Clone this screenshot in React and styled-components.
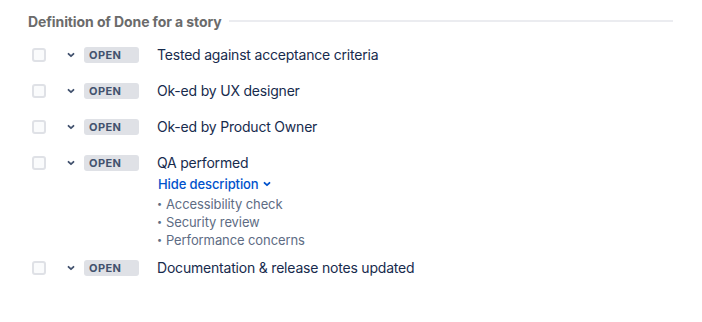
import React from "react";
import styled, { createGlobalStyle } from "styled-components";

const GlobalStyle = createGlobalStyle`
  body {
    margin: 0;
    background: #ffffff;
    font-family: Inter, "Noto Sans", sans-serif;
  }
`;

const items = [
  { title: "Tested against acceptance criteria" },
  { title: "Ok-ed by UX designer" },
  { title: "Ok-ed by Product Owner" },
  {
    title: "QA performed",
    description: ["Accessibility check", "Security review", "Performance concerns"],
  },
  { title: "Documentation & release notes updated" },
];

function Chevron({ color = "#42526e", size = 10 }) {
  return (
    <svg width={size} height={size} viewBox="0 0 10 10" fill="none">
      <path d="M2.5 3.8 L5 6.2 L7.5 3.8" stroke={color} strokeWidth="1.8" strokeLinecap="round" strokeLinejoin="round" />
    </svg>
  );
}

function ChecklistItem({ item }) {
  return (
    <Row>
      <Checkbox />
      <Toggle>
        <Chevron />
      </Toggle>
      <Lozenge>OPEN</Lozenge>
      <Body>
        <Title>{item.title}</Title>
        {item.description && (
          <>
            <HideLink>
              Hide description <Chevron color="#0052cc" size={10} />
            </HideLink>
            <Bullets>
              {item.description.map((d) => (
                <li key={d}>{d}</li>
              ))}
            </Bullets>
          </>
        )}
      </Body>
    </Row>
  );
}

export default function App() {
  return (
    <>
      <GlobalStyle />
      <Container>
        <Header>
          <Heading>Definition of Done for a story</Heading>
          <Rule />
        </Header>
        <List>
          {items.map((item) => (
            <ChecklistItem key={item.title} item={item} />
          ))}
        </List>
      </Container>
    </>
  );
}

const Container = styled.div`
  width: 645px;
  padding: 12px 0 0 28px;
`;

const Header = styled.div`
  display: flex;
  align-items: center;
  gap: 7px;
  height: 18px;
`;

const Heading = styled.h3`
  margin: 0;
  font-size: 14px;
  font-weight: 700;
  letter-spacing: -0.1px;
  color: #6b6b6b;
  white-space: nowrap;
`;

const Rule = styled.div`
  flex: 1;
  height: 2px;
  background: #ebecf0;
`;

const List = styled.div`
  display: flex;
  flex-direction: column;
  gap: 18px;
  margin-top: 16px;
`;

const Row = styled.div`
  display: flex;
  align-items: flex-start;
`;

const Checkbox = styled.span`
  box-sizing: border-box;
  width: 14px;
  height: 14px;
  margin: 2px 0 0 4px;
  border: 2px solid #dfe1e6;
  border-radius: 3px;
  background: #fafbfc;
`;

const Toggle = styled.span`
  display: flex;
  align-items: center;
  justify-content: center;
  width: 10px;
  height: 18px;
  margin-left: 20px;
`;

const Lozenge = styled.span`
  box-sizing: border-box;
  width: 55px;
  height: 16px;
  margin: 1px 0 0 8px;
  padding: 0 5px;
  border-radius: 3px;
  background: #dfe1e6;
  color: #42526e;
  font-size: 11px;
  font-weight: 700;
  line-height: 16px;
  letter-spacing: 0.4px;
`;

const Body = styled.div`
  margin-left: 18px;
  display: flex;
  flex-direction: column;
`;

const Title = styled.div`
  font-size: 14px;
  line-height: 18px;
  letter-spacing: -0.2px;
  color: #172b4d;
`;

const HideLink = styled.button`
  display: flex;
  align-items: center;
  gap: 3px;
  margin-top: 4px;
  padding: 0 0 0 1px;
  border: none;
  background: none;
  font-family: inherit;
  font-size: 13px;
  line-height: 16px;
  font-weight: 500;
  letter-spacing: -0.1px;
  color: #0052cc;
  cursor: pointer;
`;

const Bullets = styled.ul`
  margin: 3px 0 -8px;
  padding: 0;
  list-style: none;
  font-size: 13px;
  line-height: 18px;
  letter-spacing: -0.1px;
  color: #5e6c84;

  li::before {
    content: "•";
    font-size: 9px;
    margin-right: 4px;
    vertical-align: 2px;
  }
`;
